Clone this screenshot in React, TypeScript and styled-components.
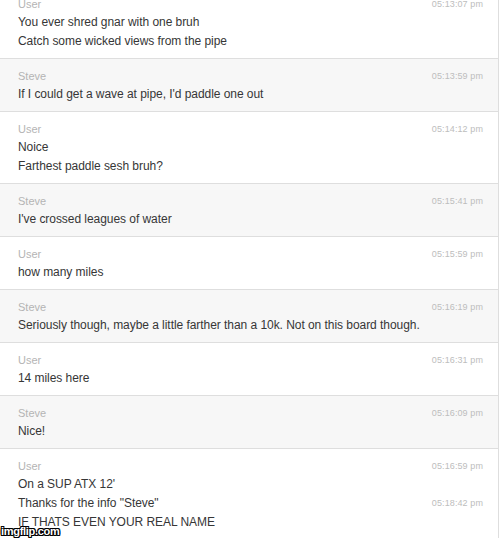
import React from "react";
import styled, { createGlobalStyle } from "styled-components";

const Global = createGlobalStyle`
  html, body { margin: 0; padding: 0; background: #fff; overflow: hidden; }
  body { font-family: "Liberation Sans", Arial, sans-serif; }
`;

const Page = styled.div`
  position: relative;
  width: 500px;
  height: 538px;
  overflow: hidden;
`;

const Log = styled.div`
  width: 498px;
  margin-top: -13px;
  border-right: 1px solid #dedede;
  display: flex;
  flex-direction: column;
`;

const Row = styled.div<{ $alt?: boolean }>`
  background: ${(p) => (p.$alt ? "#f7f7f7" : "#ffffff")};
  border-bottom: 1px solid #dedede;
  padding: 9px 15px 8px 18px;
  display: flex;
  flex-direction: column;
`;

const Header = styled.div`
  display: flex;
  justify-content: space-between;
  align-items: center;
  height: 16px;
`;

const Name = styled.span`
  font-size: 11px;
  color: #b4b4b4;
`;

const Time = styled.span`
  font-size: 9px;
  color: #bdbdbd;
  letter-spacing: 0.1px;
`;

const Line = styled.div`
  display: flex;
  justify-content: space-between;
  align-items: center;
  height: 19px;
  font-size: 12px;
  letter-spacing: -0.05px;
  color: #363636;
`;

const Watermark = styled.div`
  position: absolute;
  left: 1px;
  bottom: 1px;
  font-family: "Liberation Sans", Arial, sans-serif;
  font-weight: bold;
  font-size: 11px;
  letter-spacing: -0.3px;
  color: #fff;
  text-shadow: -1px -1px 0 #000, 1px -1px 0 #000, -1px 1px 0 #000, 1px 1px 0 #000,
    0 1px 0 #000, 0 -1px 0 #000, 1px 0 0 #000, -1px 0 0 #000;
`;

type Msg = { text: string; time?: string };
type Entry = { who: string; time: string; lines: Msg[] };

const entries: Entry[] = [
  { who: "User", time: "05:13:07 pm", lines: [{ text: "You ever shred gnar with one bruh" }, { text: "Catch some wicked views from the pipe" }] },
  { who: "Steve", time: "05:13:59 pm", lines: [{ text: "If I could get a wave at pipe, I'd paddle one out" }] },
  { who: "User", time: "05:14:12 pm", lines: [{ text: "Noice" }, { text: "Farthest paddle sesh bruh?" }] },
  { who: "Steve", time: "05:15:41 pm", lines: [{ text: "I've crossed leagues of water" }] },
  { who: "User", time: "05:15:59 pm", lines: [{ text: "how many miles" }] },
  { who: "Steve", time: "05:16:19 pm", lines: [{ text: "Seriously though, maybe a little farther than a 10k. Not on this board though." }] },
  { who: "User", time: "05:16:31 pm", lines: [{ text: "14 miles here" }] },
  { who: "Steve", time: "05:16:09 pm", lines: [{ text: "Nice!" }] },
  {
    who: "User",
    time: "05:16:59 pm",
    lines: [
      { text: "On a SUP ATX 12'" },
      { text: 'Thanks for the info "Steve"', time: "05:18:42 pm" },
      { text: "IF THATS EVEN YOUR REAL NAME" },
    ],
  },
];

export default function App() {
  return (
    <>
      <Global />
      <Page>
        <Log>
          {entries.map((e, i) => (
            <Row key={i} $alt={e.who === "Steve"}>
              <Header>
                <Name>{e.who}</Name>
                <Time>{e.time}</Time>
              </Header>
              {e.lines.map((l, j) => (
                <Line key={j}>
                  <span>{l.text}</span>
                  {l.time && <Time>{l.time}</Time>}
                </Line>
              ))}
            </Row>
          ))}
        </Log>
        <Watermark>imgflip.com</Watermark>
      </Page>
    </>
  );
}
